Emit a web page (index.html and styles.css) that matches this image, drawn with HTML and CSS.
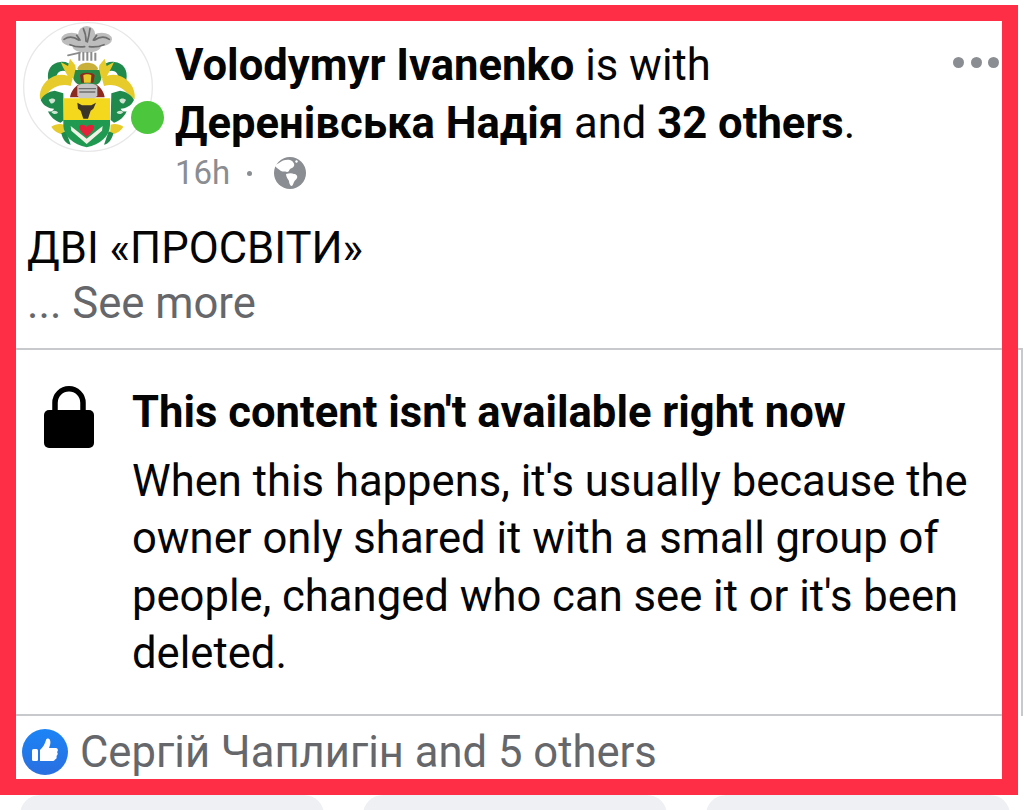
FILE: index.html
```html
<!DOCTYPE html>
<html lang="en">

<head>
  <meta charset="UTF-8">
  <meta name="viewport" content="width=device-width, initial-scale=1.0">
  <title>Post</title>
  <link rel="stylesheet" href="styles.css">
</head>

<body>
  <div class="post">
    <header class="post-head">
      <div class="avatar">
        <svg class="crest" viewBox="9 6 390 390" width="130" height="130" role="img" aria-label="Coat of arms">
          <defs>
            <g id="mantle">
              <path d="M85 180c-6-30 10-52 36-54 16-2 30 4 38 16l-8 22c-8-10-20-14-30-10-12 6-14 18-8 30z" fill="#1f8a4c"/>
              <path d="M122 126l22 12 6-22 16 20 4 34-22 8c-8-18-18-32-26-52z" fill="#e6cb2b"/>
              <path d="M60 238c-4-34 18-62 50-72 18-4 36 0 48 10l-6 22c-24-8-52 0-72 24-6 6-14 12-20 16z" fill="#e6cb2b"/>
              <path d="M62 240c6-14 24-26 42-28l26 8 2 80-10 8c-16-4-32-18-38-34 10 2 16-2 18-8-14 0-32-8-40-26z" fill="#1f8a4c"/>
              <path d="M86 240c6-6 16-6 20 0-2 8-8 12-14 10zM94 276c8-6 16-4 20 2-6 6-14 6-20-2z" fill="#cfe3d2"/>
              <path d="M94 320c12-8 26-10 38-6l2 28c-14 2-30-6-40-22z" fill="#e6cb2b"/>
              <path d="M124 340l14-6 14 40c-14-2-24-16-28-34z" fill="#1f8a4c"/>
            </g>
          </defs>
          <circle cx="204" cy="201" r="193" fill="#fff" stroke="#e8e8e8" stroke-width="4"/>
          <g fill="#bdbdbd">
            <ellipse cx="155" cy="58" rx="31" ry="20"/>
            <ellipse cx="245" cy="58" rx="31" ry="20"/>
            <ellipse cx="200" cy="44" rx="26" ry="26"/>
            <ellipse cx="200" cy="80" rx="42" ry="18"/>
          </g>
          <path d="M132 58c14-10 30-8 44 2M268 58c-14-10-30-8-44 2M190 26c6 12 8 24 8 38M210 26c-2 14-4 26-8 40M150 74c14 6 30 8 44 6M252 74c-14 6-30 8-44 6M170 46l10 14M230 46l-10 14" fill="none" stroke="#6e6e6e" stroke-width="5" stroke-linecap="round"/>
          <path d="M144 106l36-8" stroke="#8b8b8b" stroke-width="5" stroke-linecap="round"/>
          <path d="M178 122V98M190 122V96M202 122V96M214 122V96M226 122V98" stroke="#8a8a8a" stroke-width="6"/>
          <use href="#mantle"/>
          <use href="#mantle" transform="translate(404 0) scale(-1 1)"/>
          <path d="M172 146c6-24 54-24 62 0l-6 10h-50z" fill="#c8b03a"/>
          <path d="M166 150h72l6 26c-4 14-12 18-18 18h-48c-8-2-14-8-18-18z" fill="#2a8a45"/>
          <path d="M180 166c4-10 40-10 44 0l-4 22h-36z" fill="#8c2a20"/>
          <path d="M190 166c6-4 18-4 24 0l-2 22h-20z" fill="#e6cb2b"/>
          <path d="M150 232c2-18 14-30 24-38h56c12 8 22 22 24 38z" fill="#8c2a20"/>
          <path d="M172 198c10-10 50-10 60 0v28c-8 14-18 18-30 18s-22-4-30-18z" fill="#c6c6c6"/>
          <path d="M176 206h52M178 216h48" stroke="#6f6f6f" stroke-width="4"/>
          <path d="M130 235h140v65H130z" fill="#f3d81e"/>
          <path d="M172 248l14 8h28l14-8-8 18-8 6-8 24h-14l-8-24-8-6z" fill="#3a3328"/>
          <path d="M130 300h140v14c0 36-30 58-70 68-40-10-70-32-70-68z" fill="#1f9a50"/>
          <path d="M152 318l48 38 48-38-2 14-46 40-46-40z" fill="#f1f1e6"/>
          <path d="M180 316c6-4 14-2 20 4 6-6 14-8 20-4 8 8-8 26-20 34-12-8-28-26-20-34z" fill="#e3223a"/>
        </svg>
        <span class="online-dot"></span>
      </div>
      <div class="head-text">
        <p class="head-line"><b>Volodymyr Ivanenko</b> is with<br><b>Деренівська Надія</b> and <b>32 others</b>.</p>
        <div class="meta">
          <span>16h</span>
          <span class="meta-dot"></span>
          <svg class="globe" viewBox="0 0 32 32" width="32" height="32" aria-hidden="true">
            <circle cx="16" cy="16" r="16" fill="#8a8d91"/>
            <path d="M5 6c3-3 8-4 11-3 3 1 5 4 4 6-1 2-3 2-4 3-1 1-1 3-3 3-2-1-4 0-6-1-2-2-5-3-6-5 0-1 2-2 4-3zM12 17c3-1 6-1 8 0 2 0 4 2 3 4-1 2-2 2-3 4-1 2-1 4-3 4-1-1-2-3-2-5-1-2-3-4-3-7zM22 3l2 1-1 2-2-1z" fill="#fff"/>
          </svg>
        </div>
      </div>
      <div class="more"><span></span><span></span><span></span></div>
    </header>

    <div class="post-text">
      <div>ДВІ «ПРОСВІТИ»</div>
      <div class="see-more">... See more</div>
    </div>

    <section class="notice">
      <svg class="lock" viewBox="0 0 50 64" width="50" height="64" aria-hidden="true">
        <path d="M11 28V16.750a14 14 0 0 1 28 0V28" fill="none" stroke="#000" stroke-width="5.500"/>
        <rect x="0" y="24" width="50" height="38" rx="5" fill="#000"/>
      </svg>
      <div class="notice-text">
        <h2>This content isn't available right now</h2>
        <p>When this happens, it's usually because the owner only shared it with a small group of people, changed who can see it or it's been deleted.</p>
      </div>
    </section>

    <footer class="post-foot">
      <svg class="like" viewBox="0 0 46 46" width="46" height="46" aria-hidden="true">
        <defs>
          <linearGradient id="likeBlue" x1="0" y1="0" x2="0" y2="1">
            <stop offset="0" stop-color="#1b84f6"/>
            <stop offset="1" stop-color="#2a6fe0"/>
          </linearGradient>
        </defs>
        <circle cx="23" cy="23" r="23" fill="url(#likeBlue)"/>
        <rect x="10" y="20" width="6" height="12" rx="1.500" fill="#fff"/>
        <path d="M18 21c3-3 5-6 6-10 .4-2 3-2 4 0 1 3 0 5-1 8h7c2 0 2.500 3 1 4 1 1 1 3-.5 4 .5 1.500 0 3-1.500 3.500-.5 1-1.500 1.500-3 1.500H18z" fill="#fff"/>
      </svg>
      <span>Сергій Чаплигін and 5 others</span>
    </footer>
  </div>
  <div class="edge-line"></div>
  <div class="actions">
    <div class="action"></div>
    <div class="action"></div>
    <div class="action"></div>
  </div>
</body>

</html>
```

FILE: styles.css
```css
body,
html {
  margin: 0;
  padding: 0;
  height: 100%;
  overflow: hidden;
  background-color: #fff;
  font-family: Roboto, 'Liberation Sans', sans-serif;
  color: #050505;
}

.post {
  box-sizing: border-box;
  width: 1018px;
  height: 790px;
  margin-top: 5px;
  border: 16px solid #fe2e47;
  background-color: #fff;
}

.post-head {
  display: flex;
  height: 168px;
  padding: 1px 0 0 7px;
  box-sizing: border-box;
}

.avatar {
  position: relative;
  width: 130px;
  height: 130px;
  flex-shrink: 0;
}

.crest {
  display: block;
}

.online-dot {
  position: absolute;
  right: -11px;
  bottom: 18px;
  width: 33px;
  height: 33px;
  border-radius: 50%;
  background-color: #4cc63c;
}

.head-text {
  flex-grow: 1;
  margin-left: 22px;
}

.head-line {
  margin: 15px 0 0;
  font-size: 43.6px;
  line-height: 58px;
}

.head-line b {
  font-weight: 700;
}

.meta {
  display: flex;
  align-items: center;
  margin-top: 2px;
  font-size: 33px;
  line-height: 36px;
  color: #8a8d91;
}

.meta-dot {
  width: 5px;
  height: 5px;
  margin: 0 22px 0 17px;
  border-radius: 50%;
  background-color: #8a8d91;
}

.more {
  display: flex;
  gap: 6.500px;
  margin-top: 35px;
  padding-right: 3px;
}

.more span {
  width: 11px;
  height: 11px;
  border-radius: 50%;
  background-color: #8a8d91;
}

.post-text {
  box-sizing: border-box;
  height: 161px;
  padding: 32px 0 0 11px;
  font-size: 43.6px;
  line-height: 55px;
  border-bottom: 2px solid #c8c9cc;
}

.see-more {
  color: #65676b;
}

.notice {
  display: flex;
  box-sizing: border-box;
  height: 366px;
  padding: 33px 0 0 28px;
  border-bottom: 2px solid #c8c9cc;
}

.lock {
  flex-shrink: 0;
  margin-top: 3px;
}

.notice-text {
  margin-left: 38px;
}

.notice-text h2 {
  margin: 0;
  font-size: 43.6px;
  line-height: 60px;
  font-weight: 700;
}

.notice-text p {
  margin: 10px 0 0;
  font-size: 43.6px;
  line-height: 57.300px;
}

.post-foot {
  display: flex;
  align-items: center;
  gap: 12px;
  height: 54px;
  padding: 9px 0 0 6px;
  font-size: 43.6px;
  color: #65676b;
}

.edge-line {
  position: absolute;
  left: 1018px;
  top: 348px;
  width: 3px;
  height: 366px;
  border-top: 2px solid #c8c9cc;
  border-right: 2px solid #c8c9cc;
}

.actions {
  display: flex;
  gap: 39px;
  padding-left: 20px;
}

.action {
  width: 304px;
  height: 40px;
  border-radius: 22px;
  background-color: #eff0f4;
}
```
